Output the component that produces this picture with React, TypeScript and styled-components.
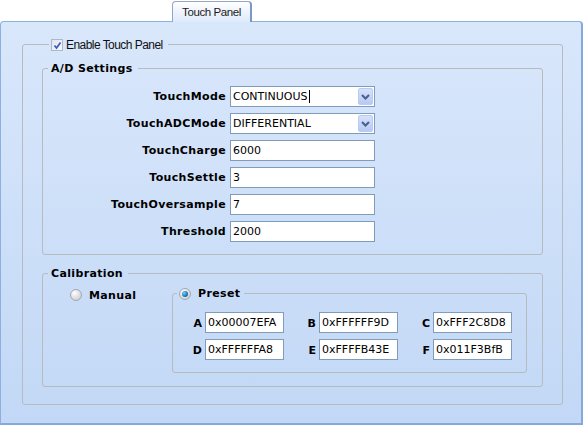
import React from "react";
import styled, { createGlobalStyle } from "styled-components";

const GlobalStyle = createGlobalStyle`
  html, body {
    margin: 0;
    padding: 0;
    background: #ffffff;
  }
  body {
    width: 583px;
    height: 425px;
    overflow: hidden;
    font-family: "DejaVu Sans", Verdana, sans-serif;
    font-size: 11px;
    color: #000;
  }
`;

const Page = styled.div`
  width: 583px;
  height: 425px;
  display: flex;
  flex-direction: column;
`;

const TabStrip = styled.div`
  height: 22px;
  display: flex;
  align-items: flex-start;
  padding-left: 172px;
  box-sizing: border-box;
`;

const Tab = styled.div`
  position: relative;
  z-index: 1;
  margin-top: 1px;
  width: 80px;
  height: 21px;
  box-sizing: border-box;
  border: 1px solid #95a6c3;
  border-right: 2px solid #7a97c7;
  border-bottom: none;
  border-radius: 4px 4px 0 0;
  background: linear-gradient(#ffffff, #dde9fb);
  display: flex;
  align-items: center;
  justify-content: center;
  font-family: "Liberation Sans", Arial, sans-serif;
  font-size: 11.5px;
  letter-spacing: -0.4px;
  color: #1a1a1a;
`;

const Panel = styled.div`
  margin-top: -1px;
  height: 404px;
  box-sizing: border-box;
  border: 1px solid #8db0e0;
  border-right: 2px solid #86a9dc;
  border-bottom: 2px solid #86a9dc;
  border-radius: 4px 4px 0 0;
  background: linear-gradient(#d9e7fb, #c2d8f6);
  padding: 14px 0 0 21px;
`;

const Group = styled.fieldset<{ $w: number; $pt: number; $pb: number; $px?: number; $mt?: number }>`
  margin: ${(p) => p.$mt ?? 0}px 0 0 0;
  width: ${(p) => p.$w}px;
  box-sizing: border-box;
  min-width: 0;
  border: 1px solid #b7babf;
  border-radius: 3px;
  padding: ${(p) => p.$pt}px ${(p) => p.$px ?? 0}px ${(p) => p.$pb}px;
`;

const Legend = styled.legend<{ $h: number; $ml: number; $pl: number; $pr: number }>`
  height: ${(p) => p.$h}px;
  margin-left: ${(p) => p.$ml}px;
  padding: 0 ${(p) => p.$pr}px 0 ${(p) => p.$pl}px;
  display: flex;
  align-items: center;
  box-sizing: border-box;
`;

const PlainText = styled.span`
  font-family: "Liberation Sans", Arial, sans-serif;
  font-size: 12px;
  letter-spacing: -0.55px;
  margin-left: 3px;
  color: #111;
`;

const BoldText = styled.span<{ $ml?: number }>`
  font-weight: bold;
  font-size: 11px;
  letter-spacing: 0.35px;
  white-space: nowrap;
  margin-left: ${(p) => p.$ml ?? 0}px;
`;

const CheckBox = styled.span`
  width: 12px;
  height: 12px;
  box-sizing: border-box;
  border: 1px solid #a9b8cc;
  background: linear-gradient(135deg, #dfe4ec, #fbfbfc);
  display: inline-flex;
  align-items: center;
  justify-content: center;
  margin-top: 1px;
`;

const Radio = styled.span<{ $checked?: boolean }>`
  width: 12px;
  height: 12px;
  box-sizing: border-box;
  border-radius: 50%;
  border: 1px solid #a4a7ad;
  background: radial-gradient(circle at 35% 30%, #ffffff 0%, #e3e4e8 45%, #c2c5cc 100%);
  display: inline-flex;
  align-items: center;
  justify-content: center;
  flex-shrink: 0;

  &::after {
    content: "";
    display: ${(p) => (p.$checked ? "block" : "none")};
    width: 6px;
    height: 6px;
    border-radius: 50%;
    background: radial-gradient(circle at 35% 35%, #7fd0f5 0%, #1f84c6 50%, #0b3f78 100%);
  }
`;

const FieldGrid = styled.div`
  display: grid;
  grid-template-columns: 183px 145px;
  column-gap: 4px;
  row-gap: 6px;
  align-items: center;
`;

const FieldLabel = styled.span`
  font-weight: bold;
  font-size: 11px;
  letter-spacing: 0.35px;
  text-align: right;
  white-space: nowrap;
`;

const TextBox = styled.input<{ $w: number }>`
  width: ${(p) => p.$w}px;
  height: 21px;
  box-sizing: border-box;
  margin: 0;
  border: 1px solid #7f9db9;
  background: #ffffff;
  padding: 0 2px;
  font-family: "DejaVu Sans", Verdana, sans-serif;
  font-size: 11px;
  color: #000;
  outline: none;
`;

const Combo = styled.div`
  width: 145px;
  height: 21px;
  box-sizing: border-box;
  border: 1px solid #7f9db9;
  background: #ffffff;
  display: flex;
  align-items: center;
  padding-left: 2px;
`;

const ComboText = styled.span`
  flex: 1;
  display: flex;
  align-items: center;
  white-space: nowrap;
`;

const Caret = styled.span`
  width: 1px;
  height: 13px;
  background: #000;
  margin-left: 1px;
`;

const ComboButton = styled.span`
  width: 15px;
  height: 17px;
  margin-right: 1px;
  box-sizing: border-box;
  border: 1px solid #b9cbf2;
  border-radius: 2px;
  background: linear-gradient(#d6e1fb, #b7c9f4);
  display: flex;
  align-items: center;
  justify-content: center;
`;

const CalRow = styled.div`
  display: flex;
  align-items: flex-start;
`;

const ManualOption = styled.div`
  width: 129px;
  flex-shrink: 0;
  box-sizing: border-box;
  padding-left: 27px;
  margin-top: 2px;
  height: 14px;
  display: flex;
  align-items: center;
`;

const PresetGrid = styled.div`
  display: grid;
  grid-template-columns: repeat(3, 110px);
  column-gap: 4px;
  row-gap: 6px;
  padding-left: 1px;
`;

const PresetCell = styled.div`
  display: flex;
  align-items: center;
  gap: 3px;
`;

const PresetLabel = styled.span`
  width: 28px;
  text-align: right;
  font-weight: bold;
  font-size: 11px;
  padding-top: 2px;
`;

const Chevron = () => (
  <svg width="9" height="6" viewBox="0 0 9 6">
    <polyline points="1,1 4.5,4.5 8,1" fill="none" stroke="#4a5f87" strokeWidth="2" />
  </svg>
);

const CheckMark = () => (
  <svg width="9" height="9" viewBox="0 0 9 9">
    <polyline points="1.5,4.5 3.5,7 7.5,1.5" fill="none" stroke="#3f5fc8" strokeWidth="1.8" />
  </svg>
);

const adFields = [
  { label: "TouchCharge", value: "6000" },
  { label: "TouchSettle", value: "3" },
  { label: "TouchOversample", value: "7" },
  { label: "Threshold", value: "2000" },
];

const presets = [
  { key: "A", value: "0x00007EFA" },
  { key: "B", value: "0xFFFFFF9D" },
  { key: "C", value: "0xFFF2C8D8" },
  { key: "D", value: "0xFFFFFFA8" },
  { key: "E", value: "0xFFFFB43E" },
  { key: "F", value: "0x011F3BfB" },
];

export default function App() {
  return (
    <>
      <GlobalStyle />
      <Page>
        <TabStrip>
          <Tab>Touch Panel</Tab>
        </TabStrip>
        <Panel>
          <Group $w={541} $pt={8} $pb={17} $px={19}>
            <Legend $h={17} $ml={7} $pl={2} $pr={5}>
              <CheckBox>
                <CheckMark />
              </CheckBox>
              <PlainText>Enable Touch Panel</PlainText>
            </Legend>

            <Group $w={501} $pt={10} $pb={12}>
              <Legend $h={15} $ml={5} $pl={3} $pr={5}>
                <BoldText>A/D Settings</BoldText>
              </Legend>
              <FieldGrid>
                <FieldLabel>TouchMode</FieldLabel>
                <Combo>
                  <ComboText>
                    CONTINUOUS
                    <Caret />
                  </ComboText>
                  <ComboButton>
                    <Chevron />
                  </ComboButton>
                </Combo>
                <FieldLabel>TouchADCMode</FieldLabel>
                <Combo>
                  <ComboText>DIFFERENTIAL</ComboText>
                  <ComboButton>
                    <Chevron />
                  </ComboButton>
                </Combo>
                {adFields.map((f) => (
                  <React.Fragment key={f.label}>
                    <FieldLabel>{f.label}</FieldLabel>
                    <TextBox $w={145} readOnly defaultValue={f.value} />
                  </React.Fragment>
                ))}
              </FieldGrid>
            </Group>

            <Group $w={501} $pt={5} $pb={13} $mt={11}>
              <Legend $h={15} $ml={5} $pl={3} $pr={5}>
                <BoldText>Calibration</BoldText>
              </Legend>
              <CalRow>
                <ManualOption>
                  <Radio />
                  <BoldText $ml={7}>Manual</BoldText>
                </ManualOption>
                <Group $w={355} $pt={11} $pb={12}>
                  <Legend $h={15} $ml={4} $pl={2} $pr={4}>
                    <Radio $checked />
                    <BoldText $ml={7}>Preset</BoldText>
                  </Legend>
                  <PresetGrid>
                    {presets.map((p) => (
                      <PresetCell key={p.key}>
                        <PresetLabel>{p.key}</PresetLabel>
                        <TextBox $w={79} readOnly defaultValue={p.value} />
                      </PresetCell>
                    ))}
                  </PresetGrid>
                </Group>
              </CalRow>
            </Group>
          </Group>
        </Panel>
      </Page>
    </>
  );
}
